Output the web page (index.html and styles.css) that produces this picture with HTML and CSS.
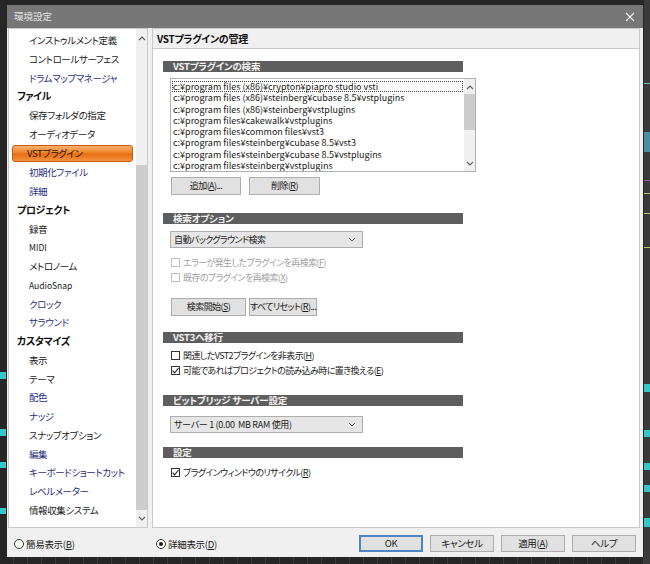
FILE: index.html
```html
<!DOCTYPE html>
<html lang="ja">
<head>
<meta charset="utf-8">
<title>環境設定</title>
<link rel="stylesheet" href="styles.css">
</head>
<body>
<div class="desk">
  <div class="dialog">
    <div class="titlebar">
      <span class="title">環境設定</span>
      <svg class="close" width="10" height="10" viewBox="0 0 10 10"><path d="M1 1 L9 9 M9 1 L1 9" stroke="#f0f0f0" stroke-width="1.1" fill="none"/></svg>
    </div>
    <div class="main">
      <div class="sidebar">
        <ul class="tree">
          <li class="sub">インストゥルメント定義</li>
          <li class="sub">コントロールサーフェス</li>
          <li class="sub blue">ドラムマップマネージャ</li>
          <li class="cat">ファイル</li>
          <li class="sub">保存フォルダの指定</li>
          <li class="sub">オーディオデータ</li>
          <li class="sel"><span class="hl">VSTプラグイン</span></li>
          <li class="sub blue">初期化ファイル</li>
          <li class="sub blue">詳細</li>
          <li class="cat">プロジェクト</li>
          <li class="sub">録音</li>
          <li class="sub small">MIDI</li>
          <li class="sub">メトロノーム</li>
          <li class="sub small">AudioSnap</li>
          <li class="sub blue">クロック</li>
          <li class="sub blue">サラウンド</li>
          <li class="cat">カスタマイズ</li>
          <li class="sub">表示</li>
          <li class="sub">テーマ</li>
          <li class="sub blue">配色</li>
          <li class="sub blue">ナッジ</li>
          <li class="sub">スナップオプション</li>
          <li class="sub blue">編集</li>
          <li class="sub blue">キーボードショートカット</li>
          <li class="sub blue">レベルメーター</li>
          <li class="sub">情報収集システム</li>
        </ul>
        <div class="vscroll side">
          <div class="arrow up"><svg width="8" height="6" viewBox="0 0 8 6"><polyline points="1,5 4,2 7,5" fill="none" stroke="#606060" stroke-width="1.2"/></svg></div>
          <div class="track"><div class="thumb"></div></div>
          <div class="arrow down"><svg width="8" height="6" viewBox="0 0 8 6"><polyline points="1,1 4,4 7,1" fill="none" stroke="#606060" stroke-width="1.2"/></svg></div>
        </div>
      </div>
      <div class="content">
        <div class="content-head">VSTプラグインの管理</div>
        <div class="content-body">
          <div class="bar b1">VSTプラグインの検索</div>
          <div class="listbox">
            <div class="items">
              <div class="item focus">c:¥program files (x86)¥crypton¥piapro studio vsti</div>
              <div class="item">c:¥program files (x86)¥steinberg¥cubase 8.5¥vstplugins</div>
              <div class="item">c:¥program files (x86)¥steinberg¥vstplugins</div>
              <div class="item">c:¥program files¥cakewalk¥vstplugins</div>
              <div class="item">c:¥program files¥common files¥vst3</div>
              <div class="item">c:¥program files¥steinberg¥cubase 8.5¥vst3</div>
              <div class="item">c:¥program files¥steinberg¥cubase 8.5¥vstplugins</div>
              <div class="item">c:¥program files¥steinberg¥vstplugins</div>
            </div>
            <div class="vscroll list">
              <div class="arrow up"><svg width="8" height="6" viewBox="0 0 8 6"><polyline points="1,5 4,2 7,5" fill="none" stroke="#606060" stroke-width="1.2"/></svg></div>
              <div class="track"><div class="thumb"></div></div>
              <div class="arrow down"><svg width="8" height="6" viewBox="0 0 8 6"><polyline points="1,1 4,4 7,1" fill="none" stroke="#606060" stroke-width="1.2"/></svg></div>
            </div>
          </div>
          <div class="btnrow r1">
            <div class="btn w70">追加(<u>A</u>)...</div>
            <div class="btn w71">削除(<u>R</u>)</div>
          </div>

          <div class="bar b2">検索オプション</div>
          <div class="combo c1"><span>自動バックグラウンド検索</span><svg width="8" height="5" viewBox="0 0 8 5"><polyline points="1,1 4,4 7,1" fill="none" stroke="#666" stroke-width="1"/></svg></div>
          <div class="check disabled k1"><span class="box"></span><span>エラーが発生したプラグインを再検索(<u>F</u>)</span></div>
          <div class="check disabled"><span class="box"></span><span>既存のプラグインを再検索(<u>X</u>)</span></div>
          <div class="btnrow r2">
            <div class="btn w75">検索開始(<u>S</u>)</div>
            <div class="btn w68">すべてリセット(<u>R</u>)...</div>
          </div>

          <div class="bar b3">VST3へ移行</div>
          <div class="check k3"><span class="box"></span><span>関連したVST2プラグインを非表示(<u>H</u>)</span></div>
          <div class="check"><span class="box"><svg width="9" height="9" viewBox="0 0 9 9"><polyline points="1.6,4.6 3.6,6.8 7.6,2" fill="none" stroke="#222" stroke-width="1.1"/></svg></span><span>可能であればプロジェクトの読み込み時に置き換える(<u>E</u>)</span></div>

          <div class="bar b4">ビットブリッジ サーバー設定</div>
          <div class="combo c2"><span class="latin">サーバー 1 (0.00  MB RAM 使用)</span><svg width="8" height="5" viewBox="0 0 8 5"><polyline points="1,1 4,4 7,1" fill="none" stroke="#666" stroke-width="1"/></svg></div>

          <div class="bar b5">設定</div>
          <div class="check k5"><span class="box"><svg width="9" height="9" viewBox="0 0 9 9"><polyline points="1.6,4.6 3.6,6.8 7.6,2" fill="none" stroke="#222" stroke-width="1.1"/></svg></span><span>プラグインウィンドウのリサイクル(<u>R</u>)</span></div>
        </div>
      </div>
    </div>
    <div class="footer">
      <div class="radio r-simple"><span class="circle"></span><span>簡易表示(<u>B</u>)</span></div>
      <div class="radio"><span class="circle on"></span><span>詳細表示(<u>D</u>)</span></div>
      <div class="actions">
        <div class="btn fbtn default">OK</div>
        <div class="btn fbtn">キャンセル</div>
        <div class="btn fbtn">適用(<u>A</u>)</div>
        <div class="btn fbtn">ヘルプ</div>
      </div>
    </div>
  </div>
</div>
</body>
</html>
```

FILE: styles.css
```css
* { box-sizing: border-box; margin: 0; padding: 0; }

html, body { width: 650px; height: 564px; overflow: hidden; }

body {
  background: #262626;
  font-family: "Noto Sans CJK JP", "Noto Sans", sans-serif;
  font-size: 10px;
  color: #1a1a1a;
  font-feature-settings: "palt";
}

.desk {
  width: 650px;
  height: 564px;
  padding: 5px 7px 0 7px;
  background:
    linear-gradient(#35c6c8, #35c6c8) 0 372px / 6px 7px no-repeat,
    linear-gradient(#35c6c8, #35c6c8) 0 429px / 6px 7px no-repeat,
    linear-gradient(#35c6c8, #35c6c8) 0 462px / 6px 6px no-repeat,
    linear-gradient(#35c6c8, #35c6c8) 0 508px / 6px 6px no-repeat,
    linear-gradient(#35c6c8, #35c6c8) 644px 384px / 6px 8px no-repeat,
    linear-gradient(#35c6c8, #35c6c8) 644px 430px / 6px 7px no-repeat,
    linear-gradient(#35c6c8, #35c6c8) 644px 463px / 6px 7px no-repeat,
    linear-gradient(#35c6c8, #35c6c8) 644px 485px / 6px 7px no-repeat,
    linear-gradient(#35c6c8, #35c6c8) 644px 518px / 6px 9px no-repeat,
    linear-gradient(#4a8fa0, #4a8fa0) 644px 132px / 6px 20px no-repeat,
    linear-gradient(#5fc0c0, #5fc0c0) 644px 83px / 6px 1px no-repeat,
    linear-gradient(#9a5aa8, #9a5aa8) 644px 180px / 6px 1px no-repeat,
    linear-gradient(#b8c850, #b8c850) 644px 193px / 6px 1px no-repeat,
    linear-gradient(#b8c850, #b8c850) 644px 213px / 6px 1px no-repeat,
    linear-gradient(#b8c850, #b8c850) 644px 247px / 6px 1px no-repeat,
    linear-gradient(#3a3a3a, #3a3a3a) 644px 0 / 6px 564px no-repeat,
    repeating-linear-gradient(90deg, #262626 0 13px, #3c3c3c 13px 14px) 0 557px / 650px 7px no-repeat,
    #262626;
}

.dialog {
  width: 636px;
  height: 552px;
  background: #f0f0f0;
  display: flex;
  flex-direction: column;
}

/* title bar */
.titlebar {
  height: 23px;
  background: #777777;
  display: flex;
  align-items: center;
  justify-content: space-between;
  padding: 0 8px 0 7px;
  color: #e4e4e4;
  font-size: 9.5px;
  line-height: 23px;
}
.close { display: block; }

/* main area */
.main {
  height: 500px;
  display: flex;
  gap: 4px;
  padding: 0 3px 0 1px;
}

.sidebar {
  width: 140px;
  height: 500px;
  background: #fff;
  border: 1px solid #c8c8c8;
  display: flex;
}

.tree {
  flex: 1;
  list-style: none;
  padding-top: 2px;
  overflow: hidden;
  font-size: 9.5px;
  letter-spacing: -0.4px;
}
.tree li {
  height: 18.76px;
  line-height: 18.76px;
  padding-left: 20px;
  white-space: nowrap;
  color: #1a1a1a;
}
.tree li.cat { padding-left: 8px; font-weight: bold; color: #111; font-size: 10px; }
.tree li.blue { color: #283080; }
.tree li.small { font-size: 8.5px; letter-spacing: 0; }
.tree li.sel { padding-left: 3px; }
.hl {
  display: block;
  width: 121px;
  height: 17px;
  margin-top: 1px;
  line-height: 15px;
  padding-left: 14px;
  border-radius: 3px;
  border: 1px solid #c65a0c;
  background: linear-gradient(#f9b070 0%, #f08a30 40%, #e86e12 55%, #f39440 100%);
  color: #2a1606;
}

/* scrollbars */
.vscroll {
  width: 11px;
  display: flex;
  flex-direction: column;
  background: #f0f0f0;
}
.vscroll .arrow {
  height: 17px;
  display: flex;
  align-items: center;
  justify-content: center;
}
.vscroll .track { flex: 1; display: flex; flex-direction: column; }
.vscroll .thumb { background: #cdcdcd; }
.side .track { padding-top: 119px; }
.side .thumb { flex: 1; }
.list .arrow { height: 15px; }
.list .thumb { height: 36px; }

/* content */
.content {
  width: 488px;
  height: 500px;
  background: #fff;
  border: 1px solid #c8c8c8;
}
.content-head {
  height: 20px;
  background: #f0f0f0;
  border-bottom: 1px solid #c8c8c8;
  padding-left: 4px;
  line-height: 19px;
  font-weight: bold;
  color: #111;
  letter-spacing: -0.3px;
}
.content-body {
  padding-left: 10px;
  display: flex;
  flex-direction: column;
  align-items: flex-start;
  font-size: 9px;
  letter-spacing: -0.6px;
}

.bar {
  width: 300px;
  height: 11px;
  background: #5e5e5e;
  color: #f2f2f2;
  font-weight: bold;
  font-size: 9.5px;
  letter-spacing: -0.2px;
  line-height: 11px;
  padding-left: 10px;
  white-space: nowrap;
}
.b1 { margin-top: 12px; }
.b2 { margin-top: 18px; }
.b3 { margin-top: 16px; }
.b4 { margin-top: 17px; }
.b5 { margin-top: 14px; }

.listbox {
  margin: 6px 0 0 7px;
  width: 306px;
  height: 94px;
  border: 1px solid #b0b0b0;
  display: flex;
}
.items {
  flex: 1;
  padding: 2px 1px 0 1px;
  font-size: 9px;
  letter-spacing: 0;
  line-height: 11.25px;
  overflow: hidden;
}
.item { white-space: nowrap; padding-left: 1px; color: #1a1a1a; }
.item.focus { outline: 1px dotted #444; outline-offset: -1px; }

/* buttons */
.btnrow {
  display: flex;
  gap: 8px;
  margin-left: 8px;
}
.r1 { margin-top: 5px; }
.r2 { margin-top: 13px; gap: 3px; }
.btn {
  height: 18px;
  background: #e1e1e1;
  border: 1px solid #adadad;
  text-align: center;
  line-height: 16px;
  color: #1a1a1a;
  white-space: nowrap;
}
.w70 { width: 70px; }
.w71 { width: 71px; }
.w75 { width: 75px; }
.w68 { width: 68px; }
u { text-decoration: underline; text-underline-offset: 1px; }

/* combo */
.combo {
  margin-left: 7px;
  width: 193px;
  height: 17px;
  background: #e6e6e6;
  border: 1px solid #adadad;
  display: flex;
  align-items: center;
  justify-content: space-between;
  padding: 0 6px 0 3px;
  line-height: 15px;
}
.combo .latin { white-space: pre; letter-spacing: -0.3px; }
.c1 { margin-top: 7px; }
.c2 { margin-top: 10px; }

/* checkboxes */
.check {
  margin-left: 8px;
  height: 15px;
  display: flex;
  align-items: center;
  gap: 3px;
  line-height: 15px;
  white-space: nowrap;
}
.check .box {
  width: 9px;
  height: 9px;
  border: 1px solid #333;
  background: #fff;
  display: flex;
  align-items: center;
  justify-content: center;
}
.check .box svg { display: block; margin: -1px; }
.check.disabled { color: #a0a0a0; }
.check.disabled .box { border-color: #c0c0c0; }
.k1 { margin-top: 7px; }
.k3 { margin-top: 5px; }
.k5 { margin-top: 7px; }

/* footer */
.footer {
  height: 29px;
  display: flex;
  align-items: center;
  padding: 2px 7px 0 7px;
  font-size: 9.5px;
  letter-spacing: -0.3px;
}
.radio {
  display: flex;
  align-items: center;
  gap: 2px;
  white-space: nowrap;
}
.r-simple { width: 142px; }
.circle {
  width: 10px;
  height: 10px;
  border-radius: 50%;
  border: 1px solid #333;
  background: #fff;
  display: flex;
  align-items: center;
  justify-content: center;
}
.circle.on::after {
  content: "";
  width: 4px;
  height: 4px;
  border-radius: 50%;
  background: #1a1a1a;
}
.actions {
  margin-left: auto;
  display: flex;
  gap: 7px;
}
.fbtn { width: 64px; height: 17px; line-height: 15px; }
.fbtn.default { border: 2px solid #4f86c2; line-height: 13px; }
```
